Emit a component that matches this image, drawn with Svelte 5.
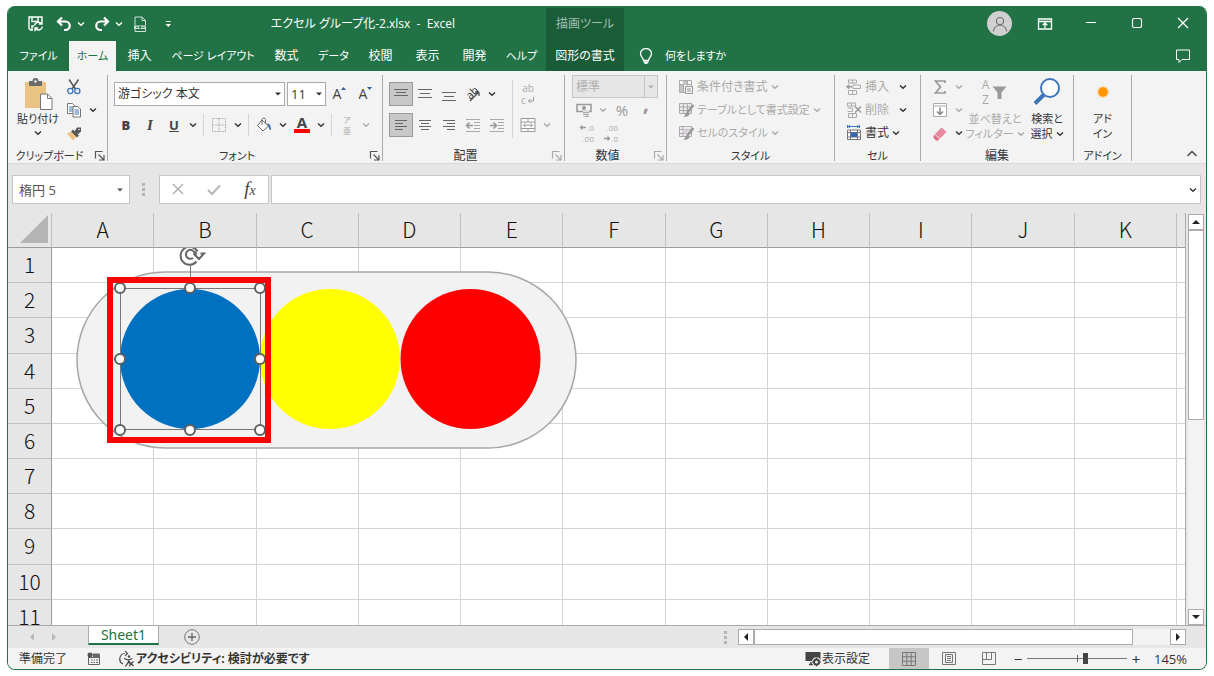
<script lang="ts">
	const columns = ['A', 'B', 'C', 'D', 'E', 'F', 'G', 'H', 'I', 'J', 'K'];
	const rows = [1, 2, 3, 4, 5, 6, 7, 8, 9, 10, 11];
	const tabs = ['ファイル', 'ホーム', '挿入', 'ページ レイアウト', '数式', 'データ', '校閲', '表示', '開発', 'ヘルプ'];

	let activeTab = $state('ホーム');
	let view = $state('normal');
	let zoom = $state(158);
	let formula = $state('');

	const handles = [
		[69, 40], [139, 40], [209, 40],
		[69, 111], [209, 111],
		[69, 182], [139, 182], [209, 182]
	];

	// labels in katakana only are set one size smaller
	const isKana = (text: string) => /^[ァ-ー ]+$/.test(text);

	const lines = (list: number[][]) =>
		list.map(([a, b, y]) => `<path d="M${a} ${y}H${b}" stroke="#666"/>`).join('');

	// inner markup of every icon, drawn on a 16 x 16 box unless noted otherwise
	const icons: Record<string, string> = {
		save: '<path d="M5 14H2.500L1 12.500V1h13v4M4 1v4.500h6V1M4 14v-4h2" fill="none" stroke="#fff" stroke-width="1.400"/><path d="M6.500 9.500a4 4 0 0 1 7-1.800M14.500 10.500a4 4 0 0 1-7 2M14 4.800v3.200h-3.200M7 15.200V12h3.200" fill="none" stroke="#fff" stroke-width="1.400"/>',
		undo: '<path d="M6 1.500L2 5.500l4 4M2.500 5.500H9.500a4 4 0 0 1 0 8.500H8" fill="none" stroke="#fff" stroke-width="2.200"/>',
		redo: '<path d="M10 1.500l4 4-4 4M13.500 5.500H6.500a4 4 0 0 0 0 8.500H8" fill="none" stroke="#fff" stroke-width="2.200"/>',
		page: '<path d="M3 9V1h7l3.500 3.500V9M10 1v3.500h3.500M3 13v2.500h10.500V13" fill="none" stroke="#cfe0d6"/><path d="M2 9.500h12v3.500H2z" fill="#cfe0d6"/><path d="M4 11.300h2M10.500 11.300h2" stroke="#217346"/><circle cx="8.200" cy="11.200" r="1.300" fill="#217346"/>',
		more: '<path d="M6 5.500h4.500" stroke="#fff"/><path d="M5.500 8h5.500l-2.700 3z" fill="#fff"/>',
		bulb: '<path d="M5.500 12.500c0-2.500-3-3.500-3-7a5.500 5 0 0 1 11 0c0 3.500-3 4.500-3 7z" fill="none" stroke="#fff" stroke-width="1.300"/><path d="M5.500 14h5M6.500 15.500h3" stroke="#fff" stroke-width="1.300"/>',
		ribbon: '<path d="M1.500 3h13v10h-13zM1.500 5.500h13M8 12V7M5.700 9.200L8 7l2.300 2.200" fill="none" stroke="#fff" stroke-width="1.300"/>',
		min: '<path d="M3 6.500h10" stroke="#fff" stroke-width="1.200"/>',
		max: '<rect x="3.500" y="2.500" width="9" height="9" rx="1.500" fill="none" stroke="#fff" stroke-width="1.200"/>',
		close: '<path d="M3 2l10 10M13 2L3 12" stroke="#fff" stroke-width="1.300"/>',
		comment: '<path d="M1.500 2h13v9.500H7l-3 3v-3H1.500z" fill="none" stroke="#fff"/>',
		person: '<circle cx="8" cy="5" r="3.700" fill="none" stroke="#666"/><path d="M1.500 15.500a6.500 6.500 0 0 1 13 0" fill="none" stroke="#666"/>',
		// 32 x 34
		paste: '<path d="M3 5h21v26H3z" fill="#eac282"/><path d="M7 4h3.500a3 3 0 0 1 6 0H20v5H7z" fill="#6b6b6b"/><circle cx="13.500" cy="4.500" r="1.300" fill="#f3f3f3"/><path d="M18.500 17h7l4.500 4.500v11H18.500z" fill="#fff" stroke="#777"/><path d="M25.500 17v4.500H30" fill="none" stroke="#777"/>',
		cut: '<path d="M3 .5l6.500 9.500M12.500.5L6 10" stroke="#555" stroke-width="1.500"/><circle cx="4.300" cy="12" r="2.600" fill="none" stroke="#3d76b8" stroke-width="1.300"/><circle cx="11.300" cy="12" r="2.600" fill="none" stroke="#3d76b8" stroke-width="1.300"/>',
		copy: '<path d="M1.500 1.500h5L9 4v7.500H1.500z" fill="#fff" stroke="#777"/><path d="M3 5h4M3 7h4M3 9h4" stroke="#3d76b8"/><path d="M7 4.500h5l2.500 2.500v8H7z" fill="#fff" stroke="#777"/><path d="M8.500 8h4.500M8.500 10h4.500M8.500 12h4.500" stroke="#3d76b8"/>',
		painter: '<path d="M1 8.500l6-2.500 4.500 4.500-4.500 5z" fill="#eac282"/><path d="M6 5.500l6 6" stroke="#555" stroke-width="2.500"/><path d="M11 2.500h4v4l-3.500 3L8.500 6.500z" fill="#555"/><circle cx="13" cy="4.500" r=".8" fill="#f3f3f3"/>',
		launcher: '<path d="M3.500 10.500v-7h7M6.500 6.500l5 5M12 7v5H7" fill="none" stroke="#555" stroke-width="1.200"/>',
		launcherOff: '<path d="M3.500 10.500v-7h7M6.500 6.500l5 5M12 7v5H7" fill="none" stroke="#aaa" stroke-width="1.200"/>',
		// 6 x 16
		up: '<path d="M0 4h5L2.500 1z" fill="#3d5a99"/>',
		shrink: '<path d="M0 1h5L2.500 4z" fill="#3d5a99"/>',
		borders: '<path d="M1.500 1.500h13v13h-13zM8 1.500v13M1.500 8h13" fill="none" stroke="#b9adb9" stroke-dasharray="2 1"/>',
		fill: '<path d="M6 3l6.500 6L7 14 1.500 8.500zM6 8V2.500a1.800 1.800 0 0 1 3.500 0V6" fill="#fff" stroke="#666"/><path d="M11 6.500c2.500 0 4 1.500 4 6.500-1.500 0-2-1-2.500-3.500z" fill="#3d6fa8"/>',
		orient: '<path d="M5 15L14 6M14 6v4M14 6h-4" fill="none" stroke="#555" stroke-width="1.300"/>',
		alignTop: lines([[1, 15, 3.5], [3, 13, 6.5], [1, 15, 9.5]]),
		alignMid: lines([[1, 15, 3.5], [3, 13, 7.5], [1, 15, 11.5]]),
		alignBottom: lines([[1, 15, 6.5], [3, 13, 10.5], [1, 15, 14.5]]),
		left: lines([[2, 14, 3.5], [2, 10, 6.5], [2, 14, 9.5], [2, 10, 12.5]]),
		center: lines([[2, 14, 3.5], [4, 12, 6.5], [2, 14, 9.5], [4, 12, 12.5]]),
		right: lines([[2, 14, 3.5], [6, 14, 6.5], [2, 14, 9.5], [6, 14, 12.5]]),
		outdent: '<path d="M1 2.500h14M9 5.500h6M9 8.500h6M9 11.500h6M1 14.500h14" stroke="#aaa"/><path d="M8 8.500H2M4.500 5.500l-3 3 3 3" fill="none" stroke="#999" stroke-width="1.600"/>',
		indent: '<path d="M1 2.500h14M9 5.500h6M9 8.500h6M9 11.500h6M1 14.500h14" stroke="#aaa"/><path d="M1 8.500h6M4.500 5.500l3 3-3 3" fill="none" stroke="#999" stroke-width="1.600"/>',
		// 8 x 8
		wrap: '<path d="M6.500 1v4H1.500M3.500 3l-2 2 2 2" fill="none" stroke="#999"/>',
		merge: '<path d="M1 1.500h14v13H1zM1 5h14M1 11.500h14M8 1.500V5M8 11.500v3" fill="#fff" stroke="#999"/><path d="M3.500 8.200h9M5.500 6.200l-2 2 2 2M10.500 6.200l2 2-2 2" fill="none" stroke="#999"/>',
		money: '<path d="M1 2.500h14v7H1z" fill="none" stroke="#999" stroke-width="1.500"/><circle cx="8" cy="6" r="2" fill="#999"/><path d="M7 9h6v6H7z" fill="#e4e0e4"/><path d="M7 10.500h6M7 12.500h6M9 14.500h4" stroke="#aaa"/>',
		// 8 x 8
		arrowLeft: '<path d="M7 4.500H1.500M3.500 2.500l-2 2 2 2" fill="none" stroke="#999" stroke-width="1.300"/>',
		arrowRight: '<path d="M1 4.500h5.500M4.500 2.500l2 2-2 2" fill="none" stroke="#999" stroke-width="1.300"/>',
		condition: '<path d="M1.500 1.500h12v12h-12zM5.500 1.500v12M9.500 1.500v5M1.500 5.500h12M1.500 9.500h5" fill="none" stroke="#aaa"/><path d="M5 2h4v4H5zM2 6h3v7H2z" fill="#c5c0c5"/><path d="M7.500 7.500h7v7h-7z" fill="#f3f3f3" stroke="#999"/><path d="M9 10h4M9 12h4" stroke="#999"/>',
		tableStyle: '<path d="M1.500 1.500h12v10h-12zM5.500 1.500v10M9.500 1.500v10M1.500 5h12M1.500 8.500h12" fill="#eae8ea" stroke="#aaa"/><path d="M15.500 3L9 11" stroke="#999" stroke-width="2.500"/><path d="M9.500 10l2 2c0 2-3 3-6 3 2-1 1.500-4.500 4-5z" fill="#999"/>',
		cellStyle: '<path d="M1.500 1.500h12v10h-12zM5 1.500v10M1.500 4.500h12M1.500 8.500h12" fill="#eee" stroke="#aaa"/><path d="M5 4.500h7v4H5z" fill="#ddd3dd"/><path d="M15.500 3L9 11" stroke="#999" stroke-width="2.500"/><path d="M9.500 10l2 2c0 2-3 3-6 3 2-1 1.500-4.500 4-5z" fill="#999"/>',
		insert: '<path d="M2.500 1h8v3h-8zM6.500 1v3M2.500 11.500h8v4h-8zM6.500 11v4.500M7 6h7.500v3.500H7z" fill="none" stroke="#aaa"/><path d="M6 7.800H1M3 5.800l-2 2 2 2" fill="none" stroke="#999" stroke-width="1.400"/>',
		remove: '<path d="M1.500 1h8v3h-8zM5.500 1v3M1.500 6h5v3.500h-5M2.500 11.500h8v4h-8zM6.500 11v4.500" fill="none" stroke="#aaa"/><path d="M9 4.500l6 6M15 4.500l-6 6" stroke="#999" stroke-width="1.500"/>',
		format: '<path d="M1.500 1.500h12M1.500 0v3M13.500 0v3M4 .5l-2 1 2 1M11 .5l2 1-2 1" fill="none" stroke="#3d76b8"/><path d="M1.500 5h13v9.500h-13zM4.500 5v9.500M11.500 5v9.500M1.500 7.500h13M1.500 12h13" fill="#fff" stroke="#777"/><path d="M5 7.500h6v4.500H5z" fill="#2e6db4"/>',
		sum: '<path d="M13 4V2H3.500l5 6-5 6H13v-2" fill="none" stroke="#999" stroke-width="1.700"/>',
		down: '<path d="M1.500 1.500h13v13h-13zM1.500 4h13" fill="#fff" stroke="#aaa"/><path d="M8 5.500v7M5 9.500l3 3 3-3" fill="none" stroke="#888" stroke-width="1.500"/>',
		eraser: '<path d="M9.500 2.500l5 4.500-6.500 6.500-5-4.500z" fill="#e58a9c"/><path d="M2.500 9.500l5 4.500-1.500 1.500H4L1.500 13v-2z" fill="#dc6f85"/>',
		funnel: '<path d="M.5 2.500h14L9.500 8.500V15h-4V8.500z" fill="#999"/>',
		// 30 x 30
		search: '<circle cx="18" cy="11" r="9" fill="#fff" stroke="#3d76b8" stroke-width="2"/><path d="M12 17.500L3 26.500" stroke="#3d76b8" stroke-width="4"/>',
		addin: '<circle cx="15" cy="15" r="6" fill="#ffc46b" opacity=".6"/><circle cx="15" cy="15" r="4.700" fill="#ff9500"/>',
		collapse: '<path d="M3.500 10L8 5.500l4.500 4.500" fill="none" stroke="#444" stroke-width="1.400"/>',
		cancel: '<path d="M3 2l10 10M13 2L3 12" stroke="#b0b0b0" stroke-width="1.500"/>',
		check: '<path d="M2 8l4 4L14 3.500" fill="none" stroke="#b8b8b8" stroke-width="2.200"/>',
		plus: '<circle cx="8" cy="8" r="7.300" fill="none" stroke="#777"/><path d="M8 4v8M4 8h8" stroke="#666" stroke-width="1.300"/>',
		triLeft: '<path d="M10 4v8L6 8z" fill="currentColor"/>',
		triRight: '<path d="M6 4v8l4-4z" fill="currentColor"/>',
		triUp: '<path d="M4 10h8L8 6z" fill="currentColor"/>',
		triDown: '<path d="M4 6h8l-4 4z" fill="currentColor"/>',
		macro: '<path d="M2.500 3.500h11v10h-11zM2.500 6.500h11M5 9h1.500M7.500 9H9M10 9h2M5 11.500h1.500M7.500 11.500H9M10 11.500h2" fill="none" stroke="#666"/><path d="M7 2.500h6.500V6H7z" fill="#666"/><circle cx="4" cy="4" r="2.500" fill="#555"/>',
		access: '<path d="M7 2.500a5.500 5.500 0 0 0-2 10.500M7 0l2.500 2.500L7 5" fill="none" stroke="#555" stroke-width="1.200"/><circle cx="11" cy="5.500" r="1.200" fill="#444"/><path d="M6 7.500l4.500 1.500 4-1.500M10.500 8.500v3M7.500 15.500l3-4.500 1.500 1.500M11 10.500l4.500 4.500M15.500 10.500L11 15" fill="none" stroke="#444" stroke-width="1.300"/>',
		display: '<path d="M.5 1h15v9H.5z" fill="#444"/><path d="M4 13.500h5M6 11v2" stroke="#444" stroke-width="1.500"/><circle cx="11.500" cy="11" r="4.700" fill="#f3f3f3"/><circle cx="11.500" cy="11" r="2.500" fill="none" stroke="#444" stroke-width="2"/><path d="M11.500 6.800v8.400M7.300 11h8.400" stroke="#444" stroke-width="1.500" stroke-dasharray="1.500 5.400"/>',
		normal: '<path d="M1.500 1.500h13v13h-13zM5.800 1.500v13M10.200 1.500v13M1.500 5.800h13M1.500 10.200h13" fill="none" stroke="#777"/>',
		layout: '<path d="M1.500 1.500h13v12h-13zM4.500 3.500h7v8h-7z" fill="none" stroke="#777"/><path d="M6 5.500h4M6 7.500h4M6 9.500h4" stroke="#777"/>',
		break: '<path d="M1.500 1.500h13v12h-13zM5.500 1.500v7M10.500 1.500v7M1.500 8.500h9" fill="none" stroke="#777"/>'
	};
</script>

{#snippet icon(name: string, w = 16, h = 16)}
	<svg width={w} height={h} viewBox="0 0 {w} {h}" aria-hidden="true">{@html icons[name]}</svg>
{/snippet}

{#snippet chevron()}
	<svg width="8" height="6" viewBox="0 0 8 6" aria-hidden="true">
		<path d="M1 1.500l3 2.700 3-2.700" fill="none" stroke="currentColor" stroke-width="1.400" />
	</svg>
{/snippet}

{#snippet tool(name: string, label: string)}
	<button class="tool" aria-label={label}>{@render icon(name)}</button>
{/snippet}

{#snippet caret(label: string, off = false)}
	<button class="caret" class:off aria-label={label}>{@render chevron()}</button>
{/snippet}

{#snippet caption(text: string, name = '')}
	<div class="caption">
		<span class:kana={isKana(text)}>{text}</span>
		{#if name}
			<button aria-label="{text}の設定">{@render icon(name, 14, 14)}</button>
		{/if}
	</div>
{/snippet}

<div class="window">
	<header>
		<div class="left">
			<div class="title">
				<div class="quick">
					{@render tool('save', '上書き保存')}
					<div class="pair">
						{@render tool('undo', '元に戻す')}
						{@render caret('元に戻す履歴')}
					</div>
					<div class="pair">
						{@render tool('redo', 'やり直し')}
						{@render caret('やり直し履歴')}
					</div>
					{@render tool('page', '印刷プレビュー')}
					{@render tool('more', 'クイック アクセスの設定')}
				</div>
				<h1>エクセル グループ化-2.xlsx&nbsp; -&nbsp; Excel</h1>
			</div>
			<nav>
				{#each tabs as tab}
					<button
						class="tab"
						class:file={tab == 'ファイル'}
						class:wide={tab == 'ページ レイアウト'}
						class:kana={isKana(tab)}
						class:active={activeTab == tab}
						onclick={() => (activeTab = tab)}>{tab}</button
					>
				{/each}
			</nav>
		</div>
		<div class="context">
			<span>描画ツール</span>
			<button class="tab" onclick={() => (activeTab = '図形の書式')}>図形の書式</button>
		</div>
		<div class="rest">
			<div class="controls">
				<button class="account" aria-label="アカウント">{@render icon('person')}</button>
				<button aria-label="リボンの表示オプション">{@render icon('ribbon')}</button>
				<button aria-label="最小化">{@render icon('min')}</button>
				<button aria-label="最大化">{@render icon('max')}</button>
				<button aria-label="閉じる">{@render icon('close')}</button>
			</div>
			<div class="controls tell">
				<button class="ask kana">{@render icon('bulb')}何をしますか</button>
				<button aria-label="コメント">{@render icon('comment')}</button>
			</div>
		</div>
	</header>

	<section class="ribbon">
		<div class="group clipboard">
			<div class="body">
				<button class="big kana">
					{@render icon('paste', 32, 34)}
					<span>貼り付け</span>
					{@render chevron()}
				</button>
				<div class="stack">
					<div class="line">{@render tool('cut', '切り取り')}</div>
					<div class="line">{@render tool('copy', 'コピー')}{@render caret('コピーの種類')}</div>
					<div class="line">{@render tool('painter', '書式のコピー')}</div>
				</div>
			</div>
			{@render caption('クリップボード', 'launcher')}
		</div>

		<div class="group font">
			<div class="body two">
				<div class="line boxes">
					<label class="drop name">
						<select aria-label="フォント"><option>游ゴシック 本文</option></select>
						{@render icon('triDown', 16, 16)}
					</label>
					<label class="drop size">
						<select aria-label="フォント サイズ"><option>11</option></select>
						{@render icon('triDown', 16, 16)}
					</label>
					<button class="tool grow" aria-label="拡大">A{@render icon('up', 6, 16)}</button>
					<button class="tool grow" aria-label="縮小">A{@render icon('shrink', 6, 16)}</button>
				</div>
				<div class="line">
					<button class="tool letter"><b>B</b></button>
					<button class="tool letter serif"><i>I</i></button>
					<button class="tool letter"><u>U</u></button>
					{@render caret('下線の種類')}
					<hr />
					{@render tool('borders', '罫線')}
					{@render caret('罫線の種類')}
					<hr />
					{@render tool('fill', '塗りつぶしの色')}
					{@render caret('塗りつぶしの色の一覧')}
					<button class="tool letter colour"><span>A</span></button>
					{@render caret('フォントの色の一覧')}
					<hr />
					<button class="tool ruby off"><span>ア</span><span>亜</span></button>
					{@render caret('ふりがなの設定', true)}
				</div>
			</div>
			{@render caption('フォント', 'launcher')}
		</div>

		<div class="group align">
			<div class="body">
				<div class="two">
					<div class="line">
						<button class="tool on" aria-label="上揃え">{@render icon('alignTop')}</button>
						{@render tool('alignMid', '上下中央揃え')}
						{@render tool('alignBottom', '下揃え')}
						<button class="tool slant" aria-label="方向"><span>ab</span>{@render icon('orient')}</button>
						{@render caret('方向の一覧')}
					</div>
					<div class="line">
						<button class="tool on" aria-label="左揃え">{@render icon('left')}</button>
						{@render tool('center', '中央揃え')}
						{@render tool('right', '右揃え')}
						{@render tool('outdent', 'インデントを減らす')}
						{@render tool('indent', 'インデントを増やす')}
					</div>
				</div>
				<hr class="tall" />
				<div class="two">
					<div class="line">
						<button class="tool wrap off"><span>ab</span><span>c{@render icon('wrap', 8, 8)}</span></button>
					</div>
					<div class="line">
						{@render tool('merge', 'セルを結合して中央揃え')}
						{@render caret('結合の種類', true)}
					</div>
				</div>
			</div>
			{@render caption('配置', 'launcherOff')}
		</div>

		<div class="group number">
			<div class="body stack">
				<label class="drop general">
					<select aria-label="表示形式" disabled><option>標準</option></select>
					<span>{@render icon('triDown', 16, 16)}</span>
				</label>
				<div class="line">
					{@render tool('money', '通貨表示形式')}
					{@render caret('通貨の種類', true)}
					<button class="tool percent off">%</button>
					<button class="tool comma off">,</button>
				</div>
				<div class="line">
					<button class="tool digits off">
						<span>{@render icon('arrowLeft', 8, 8)}.0</span><span>.00</span>
					</button>
					<button class="tool digits off">
						<span>.00</span><span>{@render icon('arrowRight', 8, 8)}.0</span>
					</button>
				</div>
			</div>
			{@render caption('数値', 'launcherOff')}
		</div>

		<div class="group style">
			<div class="body stack">
				<button class="row off">{@render icon('condition')}条件付き書式 {@render chevron()}</button>
				<button class="row off kana">{@render icon('tableStyle')}テーブルとして書式設定 {@render chevron()}</button>
				<button class="row off kana">{@render icon('cellStyle')}セルのスタイル {@render chevron()}</button>
			</div>
			{@render caption('スタイル')}
		</div>

		<div class="group cells">
			<div class="body stack">
				<div class="line">
					<button class="row off">{@render icon('insert')}挿入</button>
					{@render caret('挿入の種類')}
				</div>
				<div class="line">
					<button class="row off">{@render icon('remove')}削除</button>
					{@render caret('削除の種類')}
				</div>
				<button class="row">{@render icon('format')}書式 {@render chevron()}</button>
			</div>
			{@render caption('セル')}
		</div>

		<div class="group edit">
			<div class="body">
				<div class="stack">
					<div class="line">{@render tool('sum', '合計')}{@render caret('関数の一覧', true)}</div>
					<div class="line">{@render tool('down', 'フィル')}{@render caret('フィルの種類', true)}</div>
					<div class="line">{@render tool('eraser', 'クリア')}{@render caret('クリアの種類')}</div>
				</div>
				<button class="big off kana">
					<span class="sort"><span>A<br />Z</span>{@render icon('funnel')}</span>
					<span>並べ替えと</span>
					<span>フィルター {@render chevron()}</span>
				</button>
				<button class="big kana">
					{@render icon('search', 30, 30)}
					<span>検索と</span>
					<span>選択 {@render chevron()}</span>
				</button>
			</div>
			{@render caption('編集')}
		</div>

		<div class="group addin">
			<div class="body">
				<button class="big kana">
					{@render icon('addin', 30, 30)}
					<span>アド</span>
					<span>イン</span>
				</button>
			</div>
			{@render caption('アドイン')}
		</div>

		<button class="collapse" aria-label="リボンを折りたたむ">{@render icon('collapse')}</button>
	</section>

	<section class="formula">
		<label class="drop cell">
			<select aria-label="名前ボックス"><option>楕円 5</option></select>
			{@render icon('triDown', 16, 16)}
		</label>
		<span class="dots"></span>
		<div class="actions">
			<button aria-label="キャンセル">{@render icon('cancel')}</button>
			<button aria-label="入力">{@render icon('check')}</button>
			<button class="fx"><i>f<small>x</small></i></button>
		</div>
		<div class="entry">
			<input type="text" aria-label="数式バー" bind:value={formula} />
			<button class="caret" aria-label="数式バーの展開">{@render chevron()}</button>
		</div>
	</section>

	<main>
		<div class="sheet">
			<table>
				<thead>
					<tr>
						<th class="corner">
							<svg width="28" height="28" viewBox="0 0 28 28"><path d="M28 0v28H0z" fill="#b4b4b4" /></svg>
						</th>
						{#each columns as column}
							<th scope="col">{column}</th>
						{/each}
						<th class="last"></th>
					</tr>
				</thead>
				<tbody>
					{#each rows as row}
						<tr>
							<th scope="row">{row}</th>
							{#each columns as column}
								<td></td>
							{/each}
							<td></td>
						</tr>
					{/each}
				</tbody>
			</table>
			<svg class="shapes" width="600" height="220" viewBox="0 0 600 220">
				<rect x="26" y="24" width="499" height="176" rx="88" fill="#f2f2f2" stroke="#a6a6a6" stroke-width="1.500" />
				<circle cx="279" cy="111" r="70" fill="#ffff00" />
				<circle cx="419.500" cy="111" r="70" fill="#ff0000" />
				<circle cx="139" cy="111" r="70" fill="#0070c0" />
				<path d="M139.500 16v24M69.500 40.500h140v141h-140z" fill="none" stroke="#777" />
				<path d="M145.500 13.500a9 9 0 1 1 1-10" fill="none" stroke="#666" stroke-width="2" />
				<path d="M142 10a4.500 4.500 0 1 1 1.500-5.500" fill="none" stroke="#666" stroke-width="2" />
				<path d="M142.500 5.500h2.500a8 8 0 0 0-1-2M149.500 5.500H153l-5 5.500-5.500-5.500" fill="#fff" stroke="#666" stroke-width="2" />
				{#each handles as [x, y]}
					<circle cx={x} cy={y} r="5" fill="#fff" stroke="#606060" stroke-width="2" />
				{/each}
				<rect x="59" y="32" width="158" height="160" fill="none" stroke="#ff0000" stroke-width="6" />
			</svg>
		</div>
		<div class="vertical">
			<button aria-label="上へ">{@render icon('triUp')}</button>
			<div class="thumb"></div>
			<button aria-label="下へ">{@render icon('triDown')}</button>
		</div>
	</main>

	<section class="sheets">
		<div class="arrows">
			<button aria-label="前のシート">{@render icon('triLeft')}</button>
			<button aria-label="次のシート">{@render icon('triRight')}</button>
		</div>
		<button class="sheetTab">Sheet1</button>
		<button class="add" aria-label="新しいシート">{@render icon('plus')}</button>
		<span class="dots"></span>
		<div class="horizontal">
			<button aria-label="左へ">{@render icon('triLeft')}</button>
			<div class="thumb"></div>
			<button aria-label="右へ">{@render icon('triRight')}</button>
		</div>
	</section>

	<footer>
		<span>準備完了</span>
		<button class="macro" aria-label="マクロの記録">{@render icon('macro')}</button>
		<button class="checker">{@render icon('access')}アクセシビリティ: 検討が必要です</button>
		<button class="display">{@render icon('display')}表示設定</button>
		{#each ['normal', 'layout', 'break'] as name}
			<button class="view" class:on={view == name} aria-label={name} onclick={() => (view = name)}>
				{@render icon(name)}
			</button>
		{/each}
		<button class="step" aria-label="縮小" onclick={() => (zoom -= 10)}>−</button>
		<input type="range" aria-label="ズーム" min="0" max="270" bind:value={zoom} />
		<button class="step" aria-label="拡大" onclick={() => (zoom += 10)}>+</button>
		<span class="percentage">145%</span>
	</footer>
</div>

<style>
	:global(body) {
		background: #fff;
	}

	.window {
		margin: 6px 7px;
		height: calc(100vh - 12px);
		min-height: 480px;
		box-sizing: border-box;
		border: 1px solid #217346;
		border-top: none;
		border-radius: 8px;
		overflow: hidden;
		display: flex;
		flex-direction: column;
		background: #e6e6e6;
		color: #333;
		font-family: 'Open Sans', 'Noto Sans CJK JP', sans-serif;
		font-feature-settings: 'palt';
		font-size: 12px;
		line-height: 16px;
	}

	button,
	select,
	input {
		font: inherit;
		font-feature-settings: inherit;
		color: inherit;
		border: none;
		background: none;
		padding: 0;
		margin: 0;
		box-sizing: border-box;
		border-radius: 0;
	}

	button {
		display: flex;
		align-items: center;
		justify-content: center;
		white-space: nowrap;
	}

	svg {
		display: block;
		flex: none;
	}

	.kana {
		font-size: 11px;
	}

	header {
		display: flex;
		height: 65px;
		flex: none;
		background: #217346;
		color: #fff;
	}

	.left {
		width: 538px;
		flex: none;
	}

	.title {
		display: flex;
		align-items: center;
		height: 35px;
	}

	.quick {
		display: flex;
		gap: 4px;
		padding-left: 16px;

		.caret {
			width: 10px;
			color: #fff;
		}
	}

	.pair {
		display: flex;
	}

	h1 {
		flex: 1;
		margin: 0;
		font-size: 12px;
		font-weight: 400;
		text-align: center;
	}

	nav {
		display: flex;
		height: 30px;
	}

	.tab {
		width: 47px;
		height: 30px;
	}

	.tab.file {
		width: 61px;
	}

	.tab.wide {
		width: 100px;
	}

	.tab.active {
		background: #f3f3f3;
		color: #217346;
	}

	.context {
		width: 78px;
		flex: none;
		margin-top: 2px;
		background: #1b5c38;

		span {
			display: block;
			height: 33px;
			line-height: 32px;
			text-align: center;
			color: #a2c0ae;
		}

		.tab {
			width: 100%;
		}
	}

	.rest {
		flex: 1;
	}

	.controls {
		display: flex;
		justify-content: flex-end;
		align-items: center;
		height: 35px;

		button {
			width: 46px;
			height: 30px;
		}

		.account {
			width: 25px;
			height: 25px;
			margin-right: 10px;
			border-radius: 50%;
			background: #d0d0d0;
		}
	}

	.tell {
		height: 30px;
		justify-content: space-between;

		.ask {
			width: auto;
			gap: 11px;
			padding-left: 14px;
		}
	}

	.ribbon {
		display: flex;
		flex: none;
		height: 93px;
		box-sizing: border-box;
		padding: 4px 0 2px;
		background: #f3f3f3;
		border-bottom: 1px solid #d8d8d8;
	}

	.group {
		display: flex;
		flex-direction: column;
		box-sizing: border-box;
		border-right: 1px solid #aaa;
		flex: none;
	}

	.body {
		display: flex;
		height: 70px;
		width: 100%;
		box-sizing: border-box;
	}

	.caption {
		display: flex;
		height: 13px;
		margin-top: auto;

		span {
			flex: 1;
			text-align: center;
			white-space: nowrap;
		}

		button {
			width: 16px;
		}
	}

	.clipboard {
		width: 100px;
	}

	.font {
		width: 275px;

		.body {
			padding-left: 6px;
		}
	}

	.align {
		width: 182px;

		.body {
			padding-left: 6px;
		}
	}

	.number {
		width: 102px;

		.body {
			padding-left: 7px;
		}
	}

	.style {
		width: 168px;

		.body {
			padding-left: 11px;
		}
	}

	.cells {
		width: 86px;

		.body {
			padding-left: 11px;
		}

		.line .row {
			width: 50px;
		}
	}

	.edit {
		width: 153px;

		.body {
			padding-left: 6px;
		}
	}

	.addin {
		width: 58px;

		.big {
			width: 100%;
		}
	}

	.two {
		display: flex;
		flex-direction: column;
		padding-top: 3px;

		.line {
			height: 31px;
		}
	}

	.stack {
		display: flex;
		flex-direction: column;

		.line,
		.row {
			height: 23px;
		}
	}

	.line {
		display: flex;
		align-items: center;
	}

	.tool {
		width: 24px;
		height: 22px;
	}

	.caret {
		width: 14px;
		height: 22px;
		color: #333;
	}

	.off,
	.caret.off {
		color: #aaa;
	}

	.tool.on {
		height: 24px;
		border: 1px solid #9a9a9a;
		background: #c8c8c8;
	}

	hr {
		width: 1px;
		height: 22px;
		margin: 0 3px;
		border: none;
		background: #d4d4d4;
	}

	hr.tall {
		height: 58px;
		margin: 5px 3px 0;
	}

	.row {
		display: flex;
		align-items: center;
		justify-content: flex-start;
		gap: 3px;
	}

	.big {
		display: flex;
		flex-direction: column;
		justify-content: flex-start;
		align-items: center;
		line-height: 15px;
		padding: 2px 0 0;

		> svg:first-child,
		.sort {
			margin-bottom: 4px;
		}

		> span {
			display: flex;
			align-items: center;
			gap: 3px;
		}
	}

	.clipboard {
		.big {
			width: 52px;
			margin-left: 4px;
			flex: none;

			> svg:first-child {
				margin-bottom: 0;
			}

			> svg:last-child {
				margin-top: 4px;
			}
		}

		.stack .tool {
			width: 20px;
			margin-right: 2px;
		}
	}

	.edit {
		.stack .tool {
			width: 25px;
		}

		.big {
			width: 58px;
		}

		.big:last-child {
			width: 46px;
		}

		.sort {
			height: 30px;
			font-size: 12px;
			line-height: 15px;
		}
	}

	.drop {
		display: grid;
		align-items: center;
		background: #fff;
		border: 1px solid #ababab;
		box-sizing: border-box;
		color: #333;

		select {
			grid-area: 1 / 1;
			appearance: none;
			width: 100%;
			height: 100%;
			padding-left: 3px;
			opacity: 1;
		}

		> svg,
		> span {
			grid-area: 1 / 1;
			justify-self: end;
			pointer-events: none;
		}

		svg {
			width: 12px;
			height: 12px;
		}
	}

	.boxes {
		gap: 2px;
	}

	.drop.name {
		width: 171px;
		height: 24px;
	}

	.drop.size {
		width: 39px;
		height: 24px;
		font-size: 13px;
	}

	.drop.general {
		width: 86px;
		height: 23px;
		background: #e6e6e6;
		border-color: #c6c6c6;
		color: #b0b0b0;

		> span {
			display: flex;
			align-items: center;
			height: 100%;
			border-left: 1px solid #c6c6c6;
		}
	}

	.grow {
		font-size: 14px;
		color: #444;
	}

	.letter {
		font-size: 13px;
		font-weight: 700;
		color: #444;
	}

	.serif {
		font-family: 'Liberation Serif', serif;
		font-size: 15px;
	}

	.colour span {
		width: 16px;
		line-height: 13px;
		font-size: 15px;
		border-bottom: 4px solid #ff0000;
	}

	.ruby,
	.digits {
		flex-direction: column;
		font-size: 8px;
		line-height: 11px;
	}

	.wrap {
		flex-direction: column;
		font-size: 10px;
		line-height: 12px;

		span {
			display: flex;
			align-items: center;
			gap: 1px;
		}
	}

	.digits {
		align-items: flex-end;

		span {
			display: flex;
			align-items: center;
			margin-right: 2px;
		}
	}

	.slant {
		display: grid;
		place-items: center;

		> span,
		> svg {
			grid-area: 1 / 1;
		}

		span {
			font-size: 11px;
			line-height: 11px;
			padding-bottom: 5px;
			transform: rotate(-45deg);
		}
	}

	.percent {
		font-size: 15px;
		color: #999;
	}

	.comma {
		font-size: 22px;
		font-weight: 700;
		color: #999;
		padding-bottom: 16px;
	}

	.collapse {
		margin-left: auto;
		align-self: flex-end;
		width: 28px;
		height: 14px;
	}

	.formula {
		display: flex;
		flex: none;
		height: 49px;
		box-sizing: border-box;
		padding: 11px 5px 9px 4px;
	}

	.drop.cell {
		width: 118px;
		border-color: #c6c6c6;
		font-size: 13px;
		color: #555;

		select {
			padding-left: 6px;
		}

		> svg {
			margin-right: 3px;
		}
	}

	.dots {
		width: 3px;
		height: 13px;
		align-self: center;
		margin: 0 14px 0 12px;
		background: repeating-linear-gradient(#b4b4b4 0 3px, transparent 3px 5px);
	}

	.actions {
		display: flex;
		width: 110px;
		box-sizing: border-box;
		margin-right: 2px;
		background: #fff;
		border: 1px solid #c6c6c6;

		button {
			flex: 1;
		}

		.fx {
			font-family: 'Liberation Serif', serif;
			font-size: 19px;
			color: #444;
		}

		small {
			font-size: 14px;
		}
	}

	.entry {
		display: flex;
		align-items: center;
		flex: 1;
		background: #fff;
		border: 1px solid #c6c6c6;

		input {
			flex: 1;
			height: 100%;
			padding: 0 6px;
		}
	}

	main {
		display: flex;
		flex: 1;
		min-height: 0;
	}

	.sheet {
		flex: 1;
		position: relative;
		overflow: hidden;
		border-right: 1px solid #ababab;
	}

	table {
		width: 100%;
		height: 422px;
		table-layout: fixed;
		border-collapse: separate;
		border-spacing: 0;
		background: #fff;
		font-family: 'Noto Sans CJK JP', sans-serif;
		font-size: 21px;
		line-height: 24px;
	}

	th {
		box-sizing: border-box;
		padding: 0 0 2px;
		font-weight: 300;
		color: #111;
		background: #e6e6e6;
		border-right: 1px solid #c0c0c0;
		border-bottom: 1px solid #c0c0c0;
	}

	thead th {
		height: 35px;
		border-bottom-color: #9b9b9b;
	}

	tbody th {
		border-right-color: #9b9b9b;
	}

	.corner {
		width: 44px;

		svg {
			margin-left: auto;
			margin-right: 3px;
		}
	}

	.last {
		width: 8px;
		border-right: none;
	}

	td {
		box-sizing: border-box;
		padding: 0;
		border-right: 1px solid #d4d4d4;
		border-bottom: 1px solid #d4d4d4;
	}

	td:last-child {
		border-right: none;
	}

	/* drawing layer, floats above the cells from the corner of A1 */
	.shapes {
		position: absolute;
		left: 43px;
		top: 35px;
		overflow: hidden;
	}

	.vertical {
		display: flex;
		flex-direction: column;
		width: 16px;
		margin: 1px 2px 0;

		button:last-child {
			margin-top: auto;
		}

		.thumb {
			height: 190px;
		}
	}

	.vertical,
	.horizontal {
		background: #f3f3f3;

		button,
		.thumb {
			box-sizing: border-box;
			border: 1px solid #ababab;
			background: #fff;
			color: #222;
		}

		button {
			width: 16px;
			height: 16px;
			flex: none;
		}
	}

	.sheets {
		display: flex;
		flex: none;
		height: 23px;
		box-sizing: border-box;
		border-top: 1px solid #ababab;
		padding-right: 20px;

		.dots {
			margin: 0 11px 0 auto;
		}
	}

	.arrows {
		display: flex;
		width: 80px;
		padding-left: 16px;
		box-sizing: border-box;
		gap: 6px;
		color: #b8b8b8;
	}

	.sheetTab {
		width: 71px;
		height: 19px;
		background: #fff;
		border: 1px solid #ababab;
		border-top: none;
		border-bottom: 2px solid #217346;
		color: #217346;
		font-family: 'Noto Sans', sans-serif;
		font-size: 14px;
	}

	.add {
		margin-left: 25px;
	}

	.horizontal {
		display: flex;
		width: 448px;
		height: 16px;
		margin-top: 3px;

		.thumb {
			width: 379px;
			margin-right: auto;
		}
	}

	footer {
		display: flex;
		align-items: center;
		flex: none;
		height: 21px;
		padding: 0 19px 0 11px;
		background: #f3f3f3;

		button {
			height: 100%;
		}
	}

	.macro {
		margin: 0 16px 0 19px;
	}

	.checker {
		font-weight: 700;
		gap: 2px;
	}

	.display {
		margin-left: auto;
		margin-right: 19px;
		gap: 1px;
	}

	.view {
		width: 40px;
	}

	.view.on {
		background: #c6c6c6;
	}

	.step {
		width: 18px;
		font-size: 15px;
	}

	input[type='range'] {
		appearance: none;
		width: 100px;
		height: 12px;
		background:
			linear-gradient(#666, #666) center / 1px 7px no-repeat,
			linear-gradient(#777, #777) center / 100% 1px no-repeat;
	}

	input[type='range']::-webkit-slider-thumb {
		appearance: none;
		width: 5px;
		height: 11px;
		background: #444;
	}

	.percentage {
		width: 42px;
		text-align: right;
		font-size: 13px;
	}
</style>
